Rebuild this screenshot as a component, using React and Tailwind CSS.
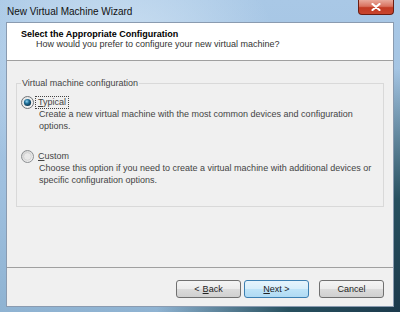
import React from "react";

function RadioOn() {
  return (
    <svg width="13" height="13" viewBox="0 0 13 13" className="shrink-0">
      <defs>
        <linearGradient id="ro" x1="0" y1="0" x2="1" y2="1">
          <stop offset="0" stopColor="#e4e4e4" />
          <stop offset="1" stopColor="#f8f8f8" />
        </linearGradient>
        <radialGradient id="rd" cx="0.4" cy="0.35" r="0.7">
          <stop offset="0" stopColor="#8fd3f2" />
          <stop offset="0.45" stopColor="#1f6f98" />
          <stop offset="1" stopColor="#0b2f45" />
        </radialGradient>
      </defs>
      <circle cx="6.5" cy="6.5" r="6" fill="url(#ro)" stroke="#6f7377" strokeWidth="1" />
      <circle cx="6.5" cy="6.5" r="3.6" fill="url(#rd)" />
    </svg>
  );
}

function RadioOff() {
  return (
    <svg width="13" height="13" viewBox="0 0 13 13" className="shrink-0">
      <defs>
        <linearGradient id="rf" x1="0" y1="0" x2="1" y2="1">
          <stop offset="0" stopColor="#cfcfcf" />
          <stop offset="1" stopColor="#f6f6f6" />
        </linearGradient>
      </defs>
      <circle cx="6.5" cy="6.5" r="6" fill="url(#rf)" stroke="#8c8f92" strokeWidth="1" />
      <circle cx="6.5" cy="6.5" r="3.8" fill="#e9e9e9" stroke="#c9c9c9" strokeWidth="0.6" />
    </svg>
  );
}

export default function App() {
  return (
    <div className="w-[400px] h-[312px] overflow-hidden flex flex-col font-['Liberation_Sans',Arial,sans-serif] bg-[radial-gradient(circle_at_100%_100%,#1c3a4c_0%,#27505f_22%,rgba(60,110,140,0)_48%),radial-gradient(ellipse_at_30%_20%,#cfe2f3_0%,rgba(207,226,243,0)_40%),linear-gradient(180deg,#a9c8e6_0%,#9fc0df_60%,#8fb3d2_100%)]">
      {/* Title bar */}
      <div className="h-[22px] flex items-start justify-between pl-[7px] pr-[6px] shrink-0">
        <span className="mt-[6px] text-[10px] leading-[12px] text-[#111]">New Virtual Machine Wizard</span>
        <div className="w-[36px] h-[15px] rounded-b-[4px] border border-t-0 border-[#6b1d12] bg-[linear-gradient(180deg,#e9a99b_0%,#d9725f_45%,#c23a23_55%,#c9462e_100%)] flex items-center justify-center">
          <svg width="10" height="8" viewBox="0 0 10 8">
            <path d="M1.5 1 L8.5 7 M8.5 1 L1.5 7" stroke="#ffffff" strokeWidth="2.2" strokeLinecap="round" />
          </svg>
        </div>
      </div>

      {/* Client area */}
      <div className="ml-[6px] mr-[6px] h-[285px] shrink-0 border border-[#8a9bb0] bg-[#f0f0f0] flex flex-col">
        {/* Header */}
        <div className="h-[38px] shrink-0 bg-white border-b border-[#a0a0a0] pt-[6px] pl-[14px]">
          <div className="text-[9px] leading-[10px] font-bold text-black">Select the Appropriate Configuration</div>
          <div className="text-[9px] leading-[10px] text-[#333] pl-[15px]">How would you prefer to configure your new virtual machine?</div>
        </div>

        {/* Body */}
        <div className="flex-1 flex flex-col">
          <fieldset className="mt-[16px] mx-[9px] border border-[#d9d9d9] pl-[4px] pr-[4px] pt-[7px] pb-[20px] text-[9px] text-[#444]">
            <legend className="px-[1px] leading-[12px]">Virtual machine configuration</legend>
            <div className="flex items-center h-[13px]">
              <RadioOn />
              <span className="ml-[1px] px-[2px] leading-[11px] border border-dotted border-[#444]">
                <span className="underline">T</span>ypical
              </span>
            </div>
            <div className="pl-[18px] -mt-[1px] leading-[12px]">
              Create a new virtual machine with the most common devices and configuration
              <br />
              options.
            </div>
            <div className="flex items-center h-[13px] mt-[18px]">
              <RadioOff />
              <span className="ml-[1px] px-[2px] leading-[11px] border border-transparent">
                <span className="underline">C</span>ustom
              </span>
            </div>
            <div className="pl-[18px] -mt-[1px] leading-[12px]">
              Choose this option if you need to create a virtual machine with additional devices or
              <br />
              specific configuration options.
            </div>
          </fieldset>
        </div>

        {/* Footer */}
        <div className="h-[39px] shrink-0 border-t border-[#a0a0a0] pt-[12px] pr-[9px] flex justify-end items-start text-[9px] text-[#222]">
          <button className="w-[65px] h-[18px] rounded-[3px] border border-[#707070] bg-[linear-gradient(180deg,#f4f4f4_0%,#ebebeb_50%,#dcdcdc_50%,#d0d0d0_100%)] flex items-center justify-center leading-none">
            &lt; <span className="underline ml-[3px]">B</span>ack
          </button>
          <button className="ml-[3px] w-[65px] h-[18px] rounded-[3px] border border-[#3c7fb1] bg-[linear-gradient(180deg,#e6f4fc_0%,#d6eefb_50%,#bfe4f8_50%,#b0daf3_100%)] flex items-center justify-center leading-none">
            <span className="underline">N</span>ext &gt;
          </button>
          <button className="ml-[10px] w-[65px] h-[18px] rounded-[3px] border border-[#707070] bg-[linear-gradient(180deg,#f4f4f4_0%,#ebebeb_50%,#dcdcdc_50%,#d0d0d0_100%)] flex items-center justify-center leading-none">
            Cancel
          </button>
        </div>
      </div>
    </div>
  );
}
